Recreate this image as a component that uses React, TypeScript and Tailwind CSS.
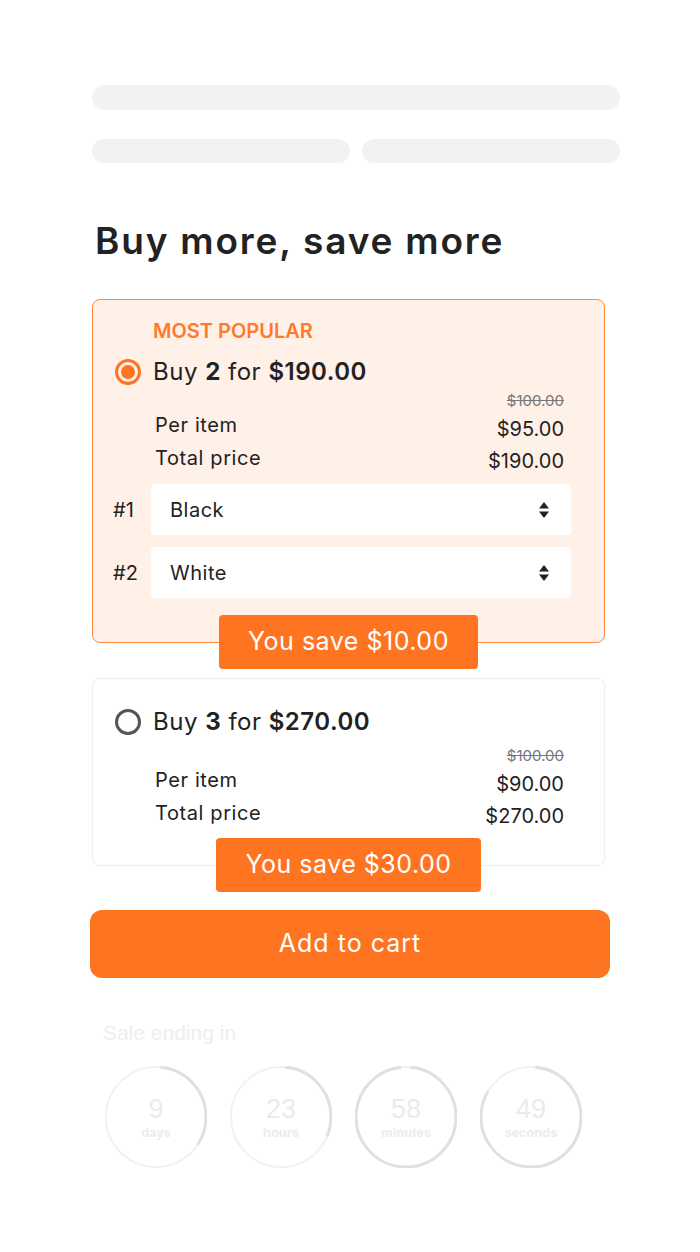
import React from 'react'

const font = { fontFamily: 'Inter, "Noto Sans", sans-serif' }

const Radio = ({ checked }: { checked: boolean }) =>
  checked ? (
    <div className="w-[26px] h-[26px] rounded-full border-[3px] border-[#ff7420] flex items-center justify-center shrink-0">
      <div className="w-[14px] h-[14px] rounded-full bg-[#ff7420]" />
    </div>
  ) : (
    <div className="w-[26px] h-[26px] rounded-full border-[3px] border-[#555] shrink-0" />
  )

const SelectArrows = () => (
  <svg width="12" height="18" viewBox="0 0 12 18" className="text-[#222]">
    <path d="M6 1 L11 7.5 L1 7.5 Z" fill="currentColor" />
    <path d="M6 17 L11 10.5 L1 10.5 Z" fill="currentColor" />
  </svg>
)

const PriceRows = ({ per, total }: { per: string; total: string }) => (
  <div className="ml-[40px] mr-[18px] flex flex-col text-[#222]">
    <div className="text-right text-[15px] text-[#777] line-through leading-[18px]">$100.00</div>
    <div className="mt-[3px] flex justify-between items-end h-[28px]">
      <span className="text-[20px] leading-[24px] mb-[4px] tracking-[0.6px]">Per item</span>
      <span className="text-[20px] leading-[24px]">{per}</span>
    </div>
    <div className="flex justify-between items-end h-[32px]">
      <span className="text-[20px] leading-[24px] mb-[3px] tracking-[0.6px]">Total price</span>
      <span className="text-[20px] leading-[24px]">{total}</span>
    </div>
  </div>
)

const Badge = ({ children }: { children: React.ReactNode }) => (
  <div className="self-center -mb-[27px] h-[54px] px-[29px] bg-[#ff7420] rounded-[4px] flex items-center text-white text-[25px] tracking-[0.5px]">
    {children}
  </div>
)

const Ring = ({ value, label, frac }: { value: string; label: string; frac: number }) => {
  const r = 50
  const c = 2 * Math.PI * r
  return (
    <div className="relative w-[102px] h-[102px] flex flex-col items-center justify-center">
      <svg width="102" height="102" viewBox="0 0 102 102" className="absolute inset-0">
        <circle cx="51" cy="51" r={r} fill="none" stroke="#f1f1f1" strokeWidth="2" />
        <circle
          cx="51"
          cy="51"
          r={r}
          fill="none"
          stroke="#e0e0e0"
          strokeWidth="3"
          strokeDasharray={`${c * frac} ${c}`}
          transform="rotate(-85 51 51)"
        />
      </svg>
      <span className="mt-[1px] text-[27px] leading-[28px] text-[#ebebeb]">{value}</span>
      <span className="mt-[2px] text-[13px] leading-[16px] font-bold text-[#ebebeb]">{label}</span>
    </div>
  )
}

export default function App() {
  return (
    <div className="min-h-[1252px] bg-white" style={font}>
      <div className="ml-[92px] w-[528px] pt-[85px]">
        {/* Skeleton */}
        <div className="h-[25px] rounded-full bg-[#f2f2f2]" />
        <div className="mt-[29px] grid grid-cols-2 gap-[12px]">
          <div className="h-[24px] rounded-full bg-[#f2f2f2]" />
          <div className="h-[24px] rounded-full bg-[#f2f2f2]" />
        </div>

        <h1 className="mt-[56px] ml-[3px] text-[37px] leading-[44px] font-semibold text-[#222] tracking-[1.8px]">
          Buy more, save more
        </h1>

        {/* Offer 1 */}
        <div className="mt-[36px] w-[513px] border border-[#ff8a3d] bg-[#fff0e8] rounded-[8px] px-[22px] pt-[19px] flex flex-col">
          <div className="ml-[38px] text-[20px] leading-[24px] font-semibold text-[#ff7a2a]">MOST POPULAR</div>
          <div className="mt-[12px] flex items-center gap-[12px] h-[34px]">
            <Radio checked />
            <span className="text-[24px] text-[#222] tracking-[0.5px]">
              Buy <b className="font-bold">2</b> for <b className="font-semibold">$190.00</b>
            </span>
          </div>
          <div className="mt-[3px]">
            <PriceRows per="$95.00" total="$190.00" />
          </div>
          <div className="mt-[11px] flex flex-col gap-[12px]">
            {['Black', 'White'].map((c, i) => (
              <div key={c} className="flex items-center">
                <span className="w-[38px] -ml-[2px] text-[20px] text-[#222]">#{i + 1}</span>
                <div className="w-[420px] h-[51px] bg-white rounded-[4px] flex items-center justify-between pl-[19px] pr-[21px]">
                  <span className="text-[20px] text-[#222] tracking-[0.5px]">{c}</span>
                  <SelectArrows />
                </div>
              </div>
            ))}
          </div>
          <div className="mt-[17px] flex flex-col">
            <Badge>You save $10.00</Badge>
          </div>
        </div>

        {/* Offer 2 */}
        <div className="mt-[35px] w-[513px] border border-[#eeeeee] bg-white rounded-[8px] px-[22px] pt-[26px] flex flex-col">
          <div className="flex items-center gap-[12px] h-[34px]">
            <Radio checked={false} />
            <span className="text-[24px] text-[#222] tracking-[0.5px]">
              Buy <b className="font-bold">3</b> for <b className="font-semibold">$270.00</b>
            </span>
          </div>
          <div className="mt-[8px]">
            <PriceRows per="$90.00" total="$270.00" />
          </div>
          <div className="mt-[10px] flex flex-col">
            <Badge>You save $30.00</Badge>
          </div>
        </div>

        <button className="mt-[44px] -ml-[2px] w-[520px] h-[68px] rounded-[12px] bg-[#ff7420] text-white text-[25px] tracking-[1px] flex items-center justify-center">
          Add to cart
        </button>

        {/* Countdown */}
        <div className="mt-[43px] ml-[11px]" style={{ fontFamily: '"Liberation Sans", Arial, sans-serif' }}>
          <div className="text-[21px] leading-[24px] text-[#eeeeee]">Sale ending in</div>
          <div className="mt-[21px] flex gap-[23px] ml-[2px]">
            <Ring value="9" label="days" frac={0.33} />
            <Ring value="23" label="hours" frac={0.3} />
            <Ring value="58" label="minutes" frac={0.97} />
            <Ring value="49" label="seconds" frac={0.82} />
          </div>
        </div>
      </div>
    </div>
  )
}
